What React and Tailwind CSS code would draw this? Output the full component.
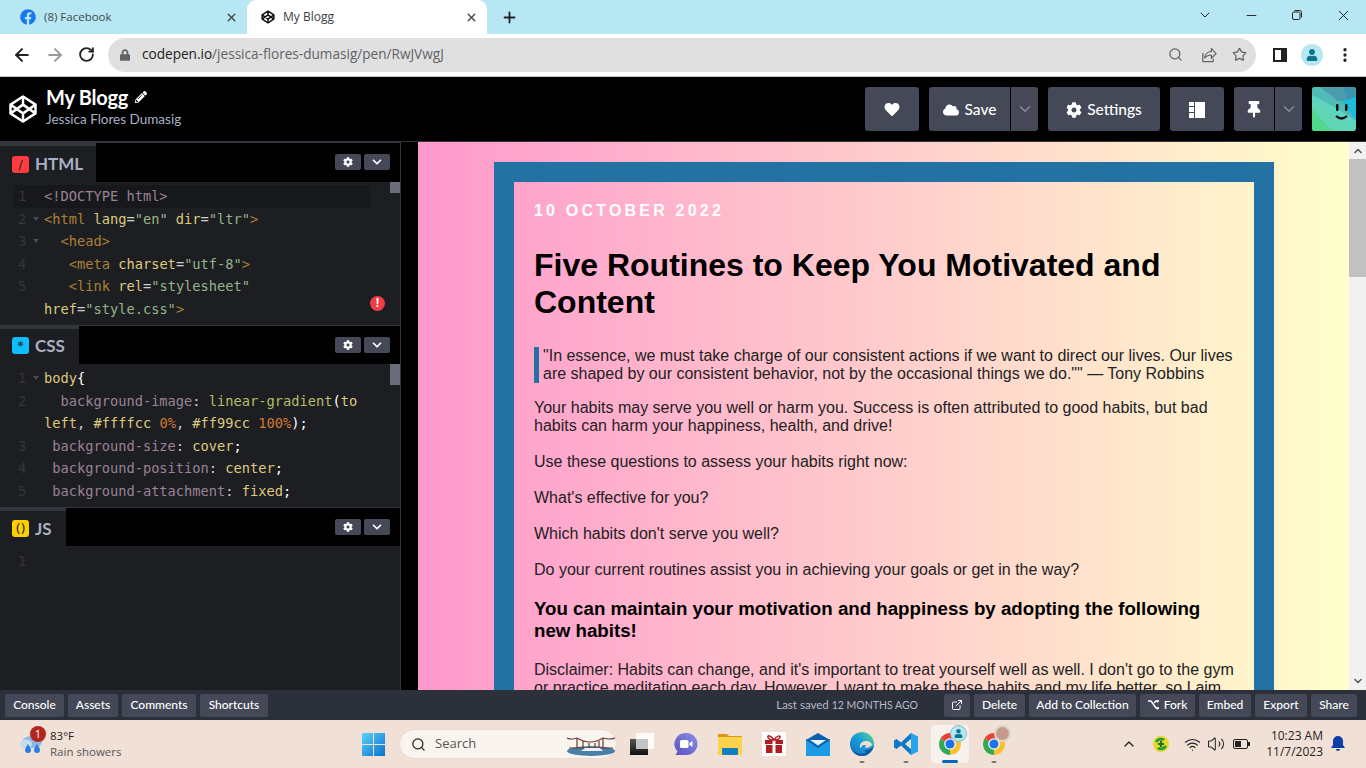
import React from "react";
import { ArrowLeft, ArrowRight, RotateCw, Search, Star, MoreVertical, ChevronDown, ChevronUp, Minus, X, Plus, ExternalLink, Volume2, Wifi } from "lucide-react";
import { FaHeart, FaCloud, FaCog, FaThumbtack, FaPencilAlt, FaLock, FaUser, FaFacebook } from "react-icons/fa";

const CP = ({ s = 30, c = "#fff", w = 2 }) => (
  <svg width={s} height={s} viewBox="0 0 24 24" fill="none" stroke={c} strokeWidth={w} strokeLinejoin="round">
    <path d="M12 2 22 8.5v7L12 22 2 15.5v-7z" />
    <path d="M12 22v-6.5M22 8.5l-10 7-10-7M2 15.5l10-7 10 7M12 2v6.5" />
  </svg>
);

const Restore = () => (
  <svg width="12" height="12" viewBox="0 0 12 12" fill="none" stroke="#222" strokeWidth="1">
    <rect x="1.5" y="3" width="7.5" height="7.5" rx="1.5" />
    <path d="M3.5 1.5h5a2 2 0 0 1 2 2v5" />
  </svg>
);

function Tabs() {
  return (
    <div className="h-[34px] bg-[#b6e7f3] flex items-end shrink-0 font-['Open_Sans',sans-serif] text-[12px]">
      <div className="w-[247px] h-[34px] flex items-center pl-[20px] pr-[9px] text-[#45494e]">
        <FaFacebook className="text-[#1877f2] w-[16px] h-[16px]" />
        <span className="ml-[8px] flex-1 text-[11.5px]">(8) Facebook</span>
        <X size={13} strokeWidth={2.6} color="#444" />
      </div>
      <div className="w-[240px] h-[34px] bg-white rounded-t-[9px] flex items-center pl-[14px] pr-[9px] text-[#3c4043]">
        <CP s={14} c="#111" w={2.6} />
        <span className="ml-[8px] flex-1">My Blogg</span>
        <X size={13} strokeWidth={2.6} color="#444" />
      </div>
      <div className="w-[44px] h-[34px] flex items-center justify-center">
        <Plus size={17} strokeWidth={2.6} color="#222" />
      </div>
      <div className="flex-1" />
      <div className="h-[30px] self-start flex items-center text-[#222]">
        <div className="w-[46px] flex justify-center"><ChevronDown size={16} strokeWidth={1.5} /></div>
        <div className="w-[46px] flex justify-center"><Minus size={15} strokeWidth={1.5} /></div>
        <div className="w-[46px] flex justify-center"><Restore /></div>
        <div className="w-[46px] flex justify-center"><X size={17} strokeWidth={1.4} /></div>
      </div>
    </div>
  );
}

function Toolbar() {
  return (
    <div className="h-[43px] bg-white flex items-center shrink-0 border-b border-[#c8c8c8] pb-[1px]">
      <div className="w-[108px] flex items-center pl-[12px] gap-[13px]">
        <ArrowLeft size={20} strokeWidth={2.4} color="#222" />
        <ArrowRight size={20} strokeWidth={2.4} color="#9a9a9a" />
        <RotateCw size={17} strokeWidth={2.6} color="#222" />
      </div>
      <div className="w-[1148px] h-[34px] rounded-full bg-[#e0e0e0] flex items-center pl-[12px] pr-[8px] font-['Open_Sans',sans-serif] text-[13.6px]">
        <FaLock className="text-[#5f6368] w-[10px] h-[12px]" />
        <span className="ml-[12px] flex-1 text-[#5f6368]"><span className="text-[#202124]">codepen.io</span>/jessica-flores-dumasig/pen/RwJVwgJ</span>
        <Search size={15} strokeWidth={2} color="#5f6368" className="mr-[17px]" />
        <svg width="17" height="16" viewBox="0 0 18 16" fill="none" stroke="#5f6368" strokeWidth="1.3" strokeLinejoin="round" className="mr-[15px]">
          <path d="M3 6v9h11v-3" />
          <path d="M5 11c0-4 3-6.500 7-6.500V1l5 5.500-5 5V8c-3 0-5.500 1-7 3z" />
        </svg>
        <Star size={15} strokeWidth={2} color="#5f6368" className="mr-[1px]" />
      </div>
      <div className="ml-[17px] w-[14px] h-[14px] border-2 border-[#202124] bg-white flex justify-end">
        <div className="w-[4px] bg-[#202124]" />
      </div>
      <div className="ml-[14px] w-[22px] h-[22px] rounded-full bg-[#b6e7f3] flex items-center justify-center overflow-hidden">
        <FaUser className="text-[#0e7490] w-[12px] h-[12px]" />
      </div>
      <MoreVertical size={18} strokeWidth={2.4} color="#222" className="ml-[13px]" />
    </div>
  );
}

const HBtn = ({ w, children }) => (
  <div className={`${w} h-[44px] bg-[#444857] rounded-[3px] flex items-center justify-center text-white text-[15.5px] font-medium pt-[1px]`}>{children}</div>
);

const LayoutIcon = () => (
  <svg width="16" height="16" viewBox="0 0 16 16" fill="#fff">
    <rect x="0" y="0" width="5" height="4" /><rect x="0" y="5" width="5" height="5" /><rect x="0" y="11" width="5" height="5" />
    <rect x="6" y="0" width="10" height="16" />
  </svg>
);

function Avatar() {
  return (
    <svg width="44" height="44" viewBox="0 0 44 44" className="rounded-[3px]">
      <rect width="44" height="44" fill="#5cd6c0" />
      <polygon points="0,0 14,0 44,14 44,34 26,22 0,8" fill="#4fbdb6" />
      <polygon points="8,0 44,0 44,14 26,14" fill="#4a9bab" />
      <polygon points="32,0 44,0 44,12 36,14" fill="#3b95ad" />
      <polygon points="30,14 44,10 44,34" fill="#1fbbdc" />
      <polygon points="0,14 22,28 44,44 0,44" fill="#62d6b4" />
      <polygon points="0,22 20,44 0,44" fill="#4ed98c" />
      <rect x="24" y="17" width="2.500" height="7" rx="1" fill="#111" />
      <rect x="33" y="17" width="2.500" height="7" rx="1" fill="#111" />
      <path d="M24 29q5.500 5 11 0" stroke="#111" strokeWidth="2.200" fill="none" />
    </svg>
  );
}

function Header() {
  return (
    <div className="h-[65px] bg-black flex items-center shrink-0 font-['Lato',sans-serif] border-b border-[#34363e]">
      <div className="ml-[8px] w-[30px] h-[30px]"><CP s={30} /></div>
      <div className="ml-[8px] flex-1 mb-[4px]">
        <div className="flex items-center text-white text-[20px] font-bold leading-[24px] tracking-[-0.25px]">
          My Blogg
          <FaPencilAlt className="ml-[7px] w-[12px] h-[12px]" />
        </div>
        <div className="text-[#aab0c4] text-[13.5px] leading-[20px]">Jessica Flores Dumasig</div>
      </div>
      <div className="flex items-center gap-[10px] mr-[10px]">
        <HBtn w="w-[54px]"><FaHeart className="w-[16px] h-[15px]" /></HBtn>
        <div className="flex w-[109px] h-[44px] rounded-[3px] bg-[#444857] text-white text-[15.5px] font-medium">
          <div className="w-[82px] border-r border-black flex items-center justify-center gap-[6px] pt-[1px]"><FaCloud className="w-[16px] h-[14px]" />Save</div>
          <div className="flex-1 flex items-center justify-center"><ChevronDown size={18} strokeWidth={2} color="#8a8e9c" /></div>
        </div>
        <HBtn w="w-[112px]"><FaCog className="w-[16px] h-[16px] mr-[5px]" />Settings</HBtn>
        <HBtn w="w-[54px]"><LayoutIcon /></HBtn>
        <div className="flex w-[68px] h-[44px] rounded-[3px] bg-[#444857] text-white">
          <div className="w-[41px] border-r border-black flex items-center justify-center"><FaThumbtack className="w-[14px] h-[17px]" /></div>
          <div className="flex-1 flex items-center justify-center"><ChevronDown size={18} strokeWidth={2} color="#8a8e9c" /></div>
        </div>
        <Avatar />
      </div>
    </div>
  );
}

const T = { m: "text-[#9a8297]", g: "text-[#a88038]", a: "text-[#ddca7e]", s: "text-[#96b38a]", w: "text-[#d0d0d0]", o: "text-[#d5782f]", f: "text-[#b5bd68]" };
const S = ({ t, children }) => <span className={T[t]}>{children}</span>;

const Fold = () => (
  <span className="absolute left-[33px] top-[9px] w-0 h-0 border-l-[3px] border-r-[3px] border-t-[4px] border-l-transparent border-r-transparent border-t-[#4a4c55]" />
);

const Line = ({ n, fold, active, children }) => (
  <div className={active
    ? "relative h-[22.5px] leading-[22.5px] whitespace-pre bg-[#17181b] mr-[30px] ml-[14px] pl-[30px]"
    : "relative h-[22.5px] leading-[22.5px] whitespace-pre pl-[44px]"}>
    {n && <span className={`absolute top-0 text-[#34363e] ${active ? "left-[4px]" : "left-[18px]"}`}>{n}</span>}
    {fold && <Fold />}
    {children}
  </div>
);

function PanelHead({ tab, label, icon, color, h }) {
  return (
    <div className={`${h} bg-black flex border-t border-[#34363e] shrink-0`}>
      <div className={`${tab} bg-[#1d1e22] flex items-center pl-[12px] border-t-[3px] border-[#34363e]`}>
        <div className={`w-[17px] h-[17px] rounded-[3px] ${color} flex items-center justify-center text-[#222] text-[13px] leading-none font-['DejaVu_Sans',sans-serif]`}>{icon}</div>
        <span className="ml-[6px] text-[#aab0c4] text-[17px] font-bold font-['Lato',sans-serif]">{label}</span>
      </div>
      <div className="flex-1" />
      <div className="flex items-center gap-[3px] pr-[10px] pb-[1px]">
        <div className="w-[26px] h-[16px] rounded-[2px] bg-[#444857] flex items-center justify-center"><FaCog className="w-[10px] h-[10px] text-white" /></div>
        <div className="w-[26px] h-[16px] rounded-[2px] bg-[#444857] flex items-center justify-center"><ChevronDown size={14} strokeWidth={3} color="#fff" /></div>
      </div>
    </div>
  );
}

function Code({ h, thumb, children }) {
  return (
    <div className={`relative ${h} bg-[#1d1e22] overflow-hidden shrink-0 font-['DejaVu_Sans_Mono',monospace] text-[13.7px] text-[#ddca7e]`}>
      {thumb && <div className={`absolute right-0 top-0 w-[10px] ${thumb} bg-[#6a6e7c]`} />}
      {children}
    </div>
  );
}

function Editors() {
  return (
    <div className="w-[401px] flex flex-col bg-[#1d1e22] border-r border-[#34363e] shrink-0">
      <PanelHead tab="w-[96px]" label="HTML" icon="/" color="bg-[#ff3c41]" h="h-[40px]" />
      <Code h="h-[143px]" thumb="h-[11px]">
        <div className="pt-[3px]">
          <Line n="1" active><S t="m">&lt;!DOCTYPE html&gt;</S></Line>
          <Line n="2" fold><S t="g">&lt;html</S> lang<S t="w">=</S><S t="s">"en"</S> dir<S t="w">=</S><S t="s">"ltr"</S><S t="g">&gt;</S></Line>
          <Line n="3" fold><S t="g">  &lt;head&gt;</S></Line>
          <Line n="4"><S t="g">   &lt;meta</S> charset<S t="w">=</S><S t="s">"utf-8"</S><S t="g">&gt;</S></Line>
          <Line n="5"><S t="g">   &lt;link</S> rel<S t="w">=</S><S t="s">"stylesheet"</S></Line>
          <Line>href<S t="w">=</S><S t="s">"style.css"</S><S t="g">&gt;</S></Line>
        </div>
        <div className="absolute left-[370px] top-[114px] w-[15px] h-[15px] rounded-full bg-[#f03e44] text-white text-[12px] leading-[15px] text-center font-bold font-['Liberation_Sans',sans-serif]">!</div>
      </Code>
      <PanelHead tab="w-[79px] pb-[2px]" label="CSS" icon="*" color="bg-[#0ebeff]" h="h-[39px]" />
      <Code h="h-[143px]" thumb="h-[21px]">
        <div className="pt-[3px]">
          <Line n="1" fold>body<span className="text-white">{"{"}</span></Line>
          <Line n="2"><S t="m">  background-image</S><S t="w">:</S> <S t="f">linear-gradient</S><span className="text-white">(</span>to</Line>
          <Line>left<S t="w">,</S> #ffffcc <S t="o">0%</S><S t="w">,</S> #ff99cc <S t="o">100%</S><span className="text-white">);</span></Line>
          <Line n="3"><S t="m"> background-size</S><S t="w">:</S> cover<span className="text-white">;</span></Line>
          <Line n="4"><S t="m"> background-position</S><S t="w">:</S> center<span className="text-white">;</span></Line>
          <Line n="5"><S t="m"> background-attachment</S><S t="w">:</S> fixed<span className="text-white">;</span></Line>
        </div>
      </Code>
      <PanelHead tab="w-[66px]" label="JS" icon="()" color="bg-[#fcd000]" h="h-[39px]" />
      <Code h="h-[144px]">
        <div className="pt-[4px]"><Line n="1" /></div>
      </Code>
    </div>
  );
}

function Preview() {
  return (
    <div className="flex-1 flex overflow-hidden">
      <div className="flex-1 overflow-hidden bg-[linear-gradient(to_left,#ffffcc_0%,#ff99cc_100%)] pt-[20px] px-[76px] font-['Liberation_Sans',sans-serif] text-[16px] leading-[18px] text-black">
        <div className="w-[780px] border-[20px] border-[#2471a3] px-[20px] pt-[20px] pb-[40px]">
          <div className="text-white font-bold tracking-[3.2px] leading-[18px]">10 OCTOBER 2022</div>
          <h1 className="mt-[27px] text-[32px] leading-[37px] font-bold">Five Routines to Keep You Motivated and Content</h1>
          <blockquote className="mt-[26px] border-l-[5px] border-[#2471a3] pl-[4px] text-[#222]">"In essence, we must take charge of our consistent actions if we want to direct our lives. Our lives are shaped by our consistent behavior, not by the occasional things we do."" — Tony Robbins</blockquote>
          <p className="mt-[16px] text-[#222]">Your habits may serve you well or harm you. Success is often attributed to good habits, but bad habits can harm your happiness, health, and drive!</p>
          <p className="mt-[18px] text-[#222]">Use these questions to assess your habits right now:</p>
          <p className="mt-[18px] text-[#222]">What's effective for you?</p>
          <p className="mt-[18px] text-[#222]">Which habits don't serve you well?</p>
          <p className="mt-[18px] text-[#222]">Do your current routines assist you in achieving your goals or get in the way?</p>
          <h3 className="mt-[19px] text-[18.7px] leading-[22px] font-bold">You can maintain your motivation and happiness by adopting the following new habits!</h3>
          <p className="mt-[19px] text-[#222]">Disclaimer: Habits can change, and it's important to treat yourself well as well. I don't go to the gym or practice meditation each day. However, I want to make these habits and my life better, so I aim</p>
        </div>
      </div>
      <div className="w-[17px] bg-[#f1f1f1] flex flex-col items-center shrink-0">
        <ChevronUp size={12} strokeWidth={3} color="#555" className="mt-[3px] mb-[2px]" />
        <div className="w-full h-[118px] bg-[#c1c1c1]" />
        <div className="flex-1" />
        <ChevronDown size={12} strokeWidth={3} color="#555" className="mb-[3px]" />
      </div>
    </div>
  );
}

const BBtn = ({ w, children }) => (
  <div className={`${w} h-[23px] bg-[#444857] rounded-[2px] flex items-center justify-center text-white text-[12px] font-medium shrink-0`}>{children}</div>
);

const ForkIcon = () => (
  <svg width="12" height="10" viewBox="0 0 12 10" fill="none" stroke="#fff" strokeWidth="1.4">
    <path d="M0 1h3l5 7h3M6 3l2-2h3M9.500 0v2.500M9.500 7v2.500" />
  </svg>
);

function BottomBar() {
  return (
    <div className="h-[30px] bg-[#2c303a] flex items-center pl-[5px] pr-[9px] shrink-0 font-['Lato',sans-serif]">
      <div className="flex gap-[4px]">
        <BBtn w="w-[59px]">Console</BBtn>
        <BBtn w="w-[50px]">Assets</BBtn>
        <BBtn w="w-[74px]">Comments</BBtn>
        <BBtn w="w-[68px]">Shortcuts</BBtn>
      </div>
      <div className="flex-1" />
      <div className="text-[#b4bccf] text-[11.5px] mr-[26px]">Last saved <span className="text-[10.5px]">12 MONTHS AGO</span></div>
      <div className="flex gap-[4px]">
        <BBtn w="w-[26px]"><ExternalLink size={12} strokeWidth={2} /></BBtn>
        <BBtn w="w-[51px]">Delete</BBtn>
        <BBtn w="w-[107px]">Add to Collection</BBtn>
        <BBtn w="w-[55px]"><ForkIcon /><span className="ml-[4px]">Fork</span></BBtn>
        <BBtn w="w-[52px]">Embed</BBtn>
        <BBtn w="w-[52px]">Export</BBtn>
        <BBtn w="w-[46px]">Share</BBtn>
      </div>
    </div>
  );
}

const Ico = ({ active, dot, children }) => (
  <div className="relative w-[44px] h-[48px] flex items-center justify-center">
    {active && <span className="absolute left-[3px] right-[3px] top-[5px] bottom-[5px] bg-[#f8f2ee] rounded-[4px]" />}
    <div className="relative">{children}</div>
    {dot && <span className="absolute bottom-[5px] left-1/2 -translate-x-1/2 w-[5px] h-[2px] rounded bg-[#7a7a7a]" />}
    {active && <span className="absolute bottom-[5px] left-1/2 -translate-x-1/2 w-[16px] h-[3px] rounded bg-[#0067c0]" />}
  </div>
);

const ChromeLogo = ({ badge }) => (
  <div className="relative w-[24px] h-[24px]">
    <svg width="24" height="24" viewBox="0 0 24 24">
      <path d="M12 12 2.500 6.500A11 11 0 0 1 21.500 6.500z" fill="#ea4335" />
      <path d="M12 12V23A11 11 0 0 1 2.500 6.500z" fill="#34a853" />
      <path d="M12 12 21.500 6.500A11 11 0 0 1 12 23z" fill="#fbc02d" />
      <circle cx="12" cy="12" r="5.800" fill="#fff" />
      <circle cx="12" cy="12" r="4.600" fill="#1a73e8" />
    </svg>
    {badge}
  </div>
);

function Taskbar() {
  return (
    <div className="h-[48px] bg-[#f1e0d6] flex items-center font-['Open_Sans',sans-serif] text-[#222] shrink-0">
      <div className="relative w-[362px] flex items-center shrink-0 pl-[19px] self-stretch">
        <svg width="26" height="22" viewBox="0 0 26 22">
          <ellipse cx="13" cy="9" rx="10" ry="6" fill="#8db8e2" />
          <ellipse cx="7" cy="11" rx="6" ry="4.500" fill="#c8dcf0" />
          <path d="M9 11c2 3 3 5 3 6a3 3 0 0 1-6 0c0-1 1-3 3-6z" fill="#2a7fdc" />
          <path d="M18 11c2 3 3 5 3 6a3 3 0 0 1-6 0c0-1 1-3 3-6z" fill="#2a7fdc" />
        </svg>
        <span className="absolute left-[30px] top-[6px] w-[16px] h-[16px] rounded-full bg-[#b3261e] text-white text-[11px] leading-[16px] text-center">1</span>
        <div className="ml-[5px] leading-[16px] text-[11.5px]">
          <div>83°F</div>
          <div className="text-[#555]">Rain showers</div>
        </div>
      </div>
      <svg width="23" height="23" viewBox="0 0 23 23" className="shrink-0">
        <defs><linearGradient id="w" x1="0" y1="0" x2="1" y2="1"><stop offset="0" stopColor="#5bd2f8" /><stop offset="1" stopColor="#0a6fd1" /></linearGradient></defs>
        <path d="M0 0h11v11H0zM12 0h11v11H12zM0 12h11v11H0zM12 12h11v11H12z" fill="url(#w)" />
      </svg>
      <div className="ml-[14px] w-[218px] h-[30px] rounded-full bg-[#faf4ef] border border-[#e6dad2] flex items-center pl-[11px] text-[13px] text-[#555] shrink-0">
        <Search size={15} strokeWidth={2} color="#222" />
        <span className="ml-[9px] flex-1">Search</span>
        <svg width="48" height="24" viewBox="0 0 48 24" className="mr-[1px]">
          <ellipse cx="24" cy="19" rx="24" ry="5" fill="#4a7fa8" />
          <path d="M2 16h44M10 16V6M36 16V6M10 6q13 8 26 0M0 6q5 2 10 0M36 6q6 2 12 0M16 9v7M22 11v5M28 11v5M32 9v7" stroke="#6e3a2e" strokeWidth="1.200" fill="none" />
          <path d="M14 19h22l-3-3H18z" fill="#eef" />
        </svg>
      </div>
      <div className="ml-[3px] flex items-center shrink-0">
        <Ico>
          <div className="relative w-[24px] h-[22px]">
            <div className="absolute left-0 bottom-0 w-[18px] h-[16px] bg-[linear-gradient(#555,#111)]" />
            <div className="absolute right-0 top-0 w-[18px] h-[16px] bg-[#ffffff]/90" />
            <div className="absolute left-[6px] top-[6px] w-[12px] h-[10px] bg-[#c4c4c4]" />
          </div>
        </Ico>
        <Ico>
          <svg width="24" height="24" viewBox="0 0 24 24"><defs><linearGradient id="t" x1="1" y1="0" x2="0" y2="1"><stop offset="0" stopColor="#8a8fe8" /><stop offset="1" stopColor="#5a50c0" /></linearGradient></defs><path d="M12.500 1a11 11 0 0 1 0 22H1.500l2-3.500A11 11 0 0 1 12.500 1z" fill="url(#t)" /><rect x="6" y="8" width="8.500" height="8" rx="1.500" fill="#fff" /><path d="M15.500 11l3-2v6l-3-2z" fill="#fff" /></svg>
        </Ico>
        <Ico>
          <svg width="24" height="22" viewBox="0 0 24 22"><path d="M0 1h9l2 2h13v4H0z" fill="#d99a10" /><rect y="4" width="24" height="18" fill="#fcd34d" /><rect x="4" y="15" width="16" height="7" rx="1" fill="#0f7fc0" /></svg>
        </Ico>
        <Ico>
          <svg width="24" height="24" viewBox="0 0 24 24"><rect width="24" height="24" fill="#fff" /><rect x="3" y="8" width="18" height="4" fill="#b01c22" /><rect x="4" y="13" width="16" height="8" fill="#b01c22" /><rect x="10.500" y="8" width="3" height="13" fill="#fff" /><path d="M12 8C9 3 5 3 6 5.500S10 8 12 8c2 0 5-.5 6-2.500S15 3 12 8z" fill="none" stroke="#b01c22" strokeWidth="1.500" /></svg>
        </Ico>
        <Ico>
          <svg width="24" height="24" viewBox="0 0 24 24"><rect y="7" width="24" height="17" fill="#1a9be6" /><path d="M0 8 12 1l12 7-12 8z" fill="#0a5fb0" /><path d="M4 8h16l-8 5.500z" fill="#e8f4fc" /></svg>
        </Ico>
        <Ico dot>
          <svg width="24" height="24" viewBox="0 0 24 24">
            <defs><linearGradient id="e" x1="0" y1="1" x2="1" y2="0"><stop offset="0" stopColor="#0f6cbd" /><stop offset=".55" stopColor="#1c9fd8" /><stop offset="1" stopColor="#5fdc8a" /></linearGradient></defs>
            <circle cx="12" cy="12" r="12" fill="url(#e)" />
            <path d="M24 13c-1 6-6 11-12 11C7 24 3 21 2 17c2 3 8 6 13 4 1-2 0-3-2-3 3 0 8 0 11-5z" fill="#0c59a4" />
            <path d="M10 14c0-3 3-5 6-5s6 2 6 4c-2 2-5 3-7 3 0-1 1-2 1-3h-3c-1 1-2 2-2 3-1 0-1-1-1-2z" fill="#f1e0d6" />
          </svg>
        </Ico>
        <Ico dot>
          <svg width="24" height="24" viewBox="0 0 24 24"><path d="M17 1 7 10.500 2.500 7 0 8.500v7L2.500 17 7 13.500 17 23v-6l-6-5 6-5z" fill="#0f78c8" /><path d="M17 1l7 3.500v15L17 23z" fill="#28a4ee" /></svg>
        </Ico>
        <Ico active>
          <ChromeLogo badge={<div className="absolute -right-[5px] -top-[7px] w-[17px] h-[17px] rounded-full bg-[#b6e7f3] border border-[#8ab8c0] flex items-center justify-center"><FaUser className="w-[9px] h-[9px] text-[#0e7490]" /></div>} />
        </Ico>
        <Ico dot>
          <ChromeLogo badge={<div className="absolute -right-[5px] -top-[7px] w-[17px] h-[17px] rounded-full bg-[#c49a8c] border-2 border-[#ddd6c8]" />} />
        </Ico>
      </div>
      <div className="flex-1" />
      <ChevronUp size={16} strokeWidth={2} color="#222" className="mr-[16px]" />
      <svg width="16" height="16" viewBox="0 0 16 16" className="mr-[15px]"><circle cx="8" cy="8" r="8" fill="#e8d82a" /><path d="M2 5a7 7 0 0 1 10-2l-2 2a5 5 0 0 0-6 2zM14 11a7 7 0 0 1-10 2l2-2a5 5 0 0 0 6-2z" fill="#2a9d3a" /><path d="M8 5v6M5 8h6" stroke="#137a22" strokeWidth="2" /></svg>
      <Wifi size={17} strokeWidth={1.6} color="#222" className="mr-[6px]" />
      <Volume2 size={18} strokeWidth={1.4} color="#222" className="mr-[8px]" />
      <svg width="17" height="10" viewBox="0 0 17 10" className="mr-[16px]"><rect x=".5" y=".5" width="14" height="9" rx="1.500" fill="none" stroke="#222" /><rect x="2" y="2" width="6" height="6" fill="#222" /><rect x="15" y="3" width="2" height="4" fill="#222" /></svg>
      <div className="text-right text-[12px] leading-[16px] mr-[8px]">
        <div>10:23 AM</div>
        <div>11/7/2023</div>
      </div>
      <svg width="14" height="16" viewBox="0 0 14 16" className="mr-[21px]"><path d="M7 0a5 5 0 0 1 5 5v4l2 3H0l2-3V5a5 5 0 0 1 5-5zM5 13h4a2 2 0 0 1-4 0z" fill="#0a3fa8" /></svg>
    </div>
  );
}

export default function App() {
  return (
    <div className="w-[1366px] h-[768px] overflow-hidden flex flex-col">
      <Tabs />
      <Toolbar />
      <Header />
      <div className="h-[548px] flex shrink-0 bg-black">
        <Editors />
        <div className="w-[17px] bg-black shrink-0" />
        <Preview />
      </div>
      <BottomBar />
      <Taskbar />
    </div>
  );
}
